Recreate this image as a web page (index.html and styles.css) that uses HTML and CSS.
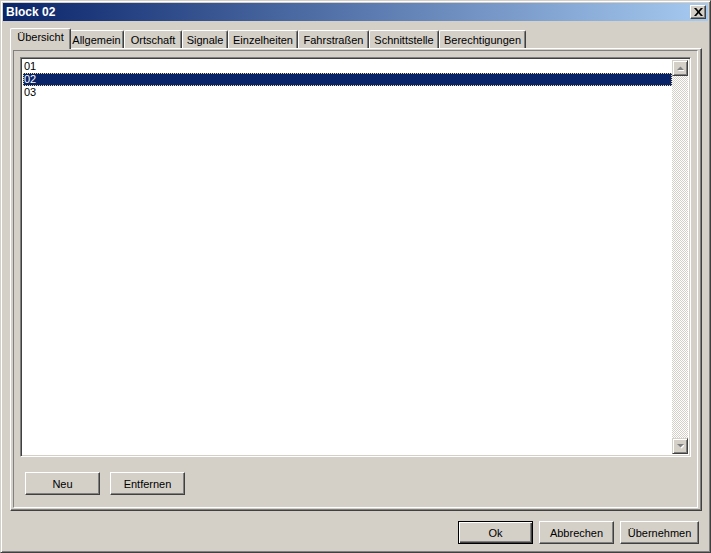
FILE: index.html
```html
<!DOCTYPE html>
<html>
<head>
    <meta charset="UTF-8">
    <title>Block 02</title>
    <link rel="stylesheet" href="styles.css">
</head>
<body>
    <div class="window">
        <!-- Title bar -->
        <div class="titlebar">
            <span class="title">Block 02</span>
            <button class="close-btn">
                <svg width="9" height="8" viewBox="0 0 9 8"><path d="M0 0h2.2l2.3 2.7L6.8 0H9L5.6 4 9 8H6.8L4.5 5.3 2.2 8H0l3.4-4z" fill="#000"/></svg>
            </button>
        </div>

        <!-- Tabs -->
        <div class="tabs">
            <div class="tab selected t-uebersicht">Übersicht</div>
            <div class="tab t-allgemein">Allgemein</div>
            <div class="tab t-ortschaft">Ortschaft</div>
            <div class="tab t-signale">Signale</div>
            <div class="tab t-einzelheiten">Einzelheiten</div>
            <div class="tab t-fahrstrassen">Fahrstraßen</div>
            <div class="tab t-schnittstelle">Schnittstelle</div>
            <div class="tab t-berechtigungen">Berechtigungen</div>
        </div>

        <div class="panel">
            <div class="page">
                <div class="listbox">
                    <div class="items">
                        <div class="item">01</div>
                        <div class="item active">02</div>
                        <div class="item">03</div>
                    </div>
                    <div class="scrollbar">
                        <div class="arrow">
                            <svg width="7" height="5" viewBox="0 0 7 5"><path d="M1 5h7L4.5 1.5z" fill="#fff"/><path d="M0 4h7L3.5 0.5z" fill="#808080"/></svg>
                        </div>
                        <div class="track"></div>
                        <div class="arrow">
                            <svg width="7" height="5" viewBox="0 0 7 5"><path d="M1 1h7L4.5 4.5z" fill="#fff"/><path d="M0 0h7L3.5 3.5z" fill="#808080"/></svg>
                        </div>
                    </div>
                </div>
                <div class="page-buttons">
                    <button class="btn">Neu</button>
                    <button class="btn">Entfernen</button>
                </div>
            </div>
        </div>

        <div class="dialog-buttons">
            <button class="btn default">Ok</button>
            <button class="btn">Abbrechen</button>
            <button class="btn wide">Übernehmen</button>
        </div>
    </div>
</body>
</html>
```

FILE: styles.css
```css
body {
    margin: 0;
    font-family: "Liberation Sans", Arial, sans-serif;
    font-size: 11px;
    color: #000;
    background: #d4d0c8;
}
.window {
    box-sizing: border-box;
    width: 711px;
    height: 553px;
    background: #d4d0c8;
    border: 1px solid;
    border-color: #d4d0c8 #404040 #404040 #d4d0c8;
    box-shadow: inset 1px 1px #fff, inset -1px -1px #808080;
    padding: 2px;
}
.titlebar {
    height: 18px;
    display: flex;
    align-items: center;
    justify-content: space-between;
    padding: 0 2px 0 3px;
    background: linear-gradient(to right, #0a246a, #a6caf0);
}
.title {
    color: #fff;
    font-weight: bold;
    font-size: 12px;
}
.close-btn {
    box-sizing: border-box;
    width: 16px;
    height: 14px;
    padding: 0;
    display: flex;
    align-items: center;
    justify-content: center;
    background: #d4d0c8;
    border: 1px solid;
    border-color: #fff #404040 #404040 #fff;
    box-shadow: inset -1px -1px #808080;
}

/* tab strip */
.tabs {
    display: flex;
    align-items: flex-end;
    height: 20px;
    margin: 7px 0 0 9px;
}
.tab {
    box-sizing: border-box;
    height: 18px;
    padding-top: 3px;
    text-align: center;
    white-space: nowrap;
    border: 1px solid;
    border-bottom: none;
    border-color: #fff #404040 #fff #fff;
    border-radius: 2px 2px 0 0;
    box-shadow: inset -1px 0 #808080;
}
.t-uebersicht { width: 57px; }
.t-allgemein { width: 55px; }
.t-ortschaft { width: 58px; }
.t-signale { width: 46px; }
.t-einzelheiten { width: 70px; }
.t-fahrstrassen { width: 71px; }
.t-schnittstelle { width: 70px; }
.t-berechtigungen { width: 87px; }
.tab.selected {
    position: relative;
    z-index: 1;
    width: 61px;
    height: 21px;
    margin: 0 -2px -1px -2px;
    padding-top: 2px;
    background: #d4d0c8;
}

.panel {
    box-sizing: border-box;
    width: 692px;
    height: 463px;
    margin-left: 7px;
    padding: 1px 3px 2px 2px;
    border: 1px solid;
    border-color: #fff #404040 #404040 #fff;
    box-shadow: inset -1px -1px #808080;
}
.page {
    box-sizing: border-box;
    height: 100%;
    border: 1px solid;
    border-color: #808080 #fff #fff #808080;
    padding: 6px 0 0 6px;
}
.listbox {
    box-sizing: border-box;
    width: 671px;
    height: 400px;
    display: flex;
    background: #fff;
    border: 1px solid;
    border-color: #808080 #fff #fff #808080;
    box-shadow: inset 1px 1px #404040, inset -1px -1px #d4d0c8;
    padding: 2px;
}
.items {
    flex: 1;
}
.item {
    box-sizing: border-box;
    height: 13px;
    line-height: 13px;
    padding-left: 1px;
}
.item.active {
    background: #0a246a;
    color: #fff;
    outline: 1px dotted #f3d98e;
    outline-offset: -1px;
}
.scrollbar {
    width: 16px;
    display: flex;
    flex-direction: column;
}
.arrow {
    box-sizing: border-box;
    height: 16px;
    display: flex;
    align-items: center;
    justify-content: center;
    background: #d4d0c8;
    border: 1px solid;
    border-color: #d4d0c8 #404040 #404040 #d4d0c8;
    box-shadow: inset 1px 1px #fff, inset -1px -1px #808080;
}
.track {
    flex: 1;
    background: repeating-conic-gradient(#fff 0 25%, #d4d0c8 0 50%) 0 0 / 2px 2px;
}
.page-buttons {
    display: flex;
    gap: 10px;
    margin: 15px 0 0 5px;
}
.btn {
    box-sizing: border-box;
    width: 75px;
    height: 23px;
    padding: 0;
    font-family: inherit;
    font-size: 11px;
    color: #000;
    background: #d4d0c8;
    border: 1px solid;
    border-color: #fff #404040 #404040 #fff;
    box-shadow: inset -1px -1px #808080;
}
.btn.default {
    border: 1px solid #000;
    box-shadow: inset 1px 1px #fff, inset -1px -1px #404040, inset -2px -2px #808080;
}
.btn.wide {
    width: 79px;
}
.dialog-buttons {
    display: flex;
    justify-content: flex-end;
    gap: 6px;
    margin-top: 10px;
    padding-right: 9px;
}
```
